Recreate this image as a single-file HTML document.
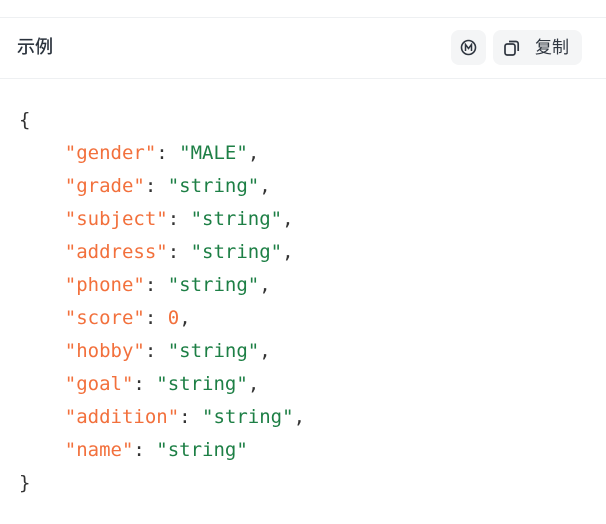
<!DOCTYPE html>
<html><head><meta charset="utf-8"><style>
body{margin:0;background:#fff;width:606px;height:524px;overflow:hidden;font-family:"Liberation Sans","Noto Sans CJK SC",sans-serif}
.top{position:absolute;left:0;top:17px;width:606px;border-top:1px solid #eef0f2}
.hdr{position:absolute;left:0;top:78px;width:606px;border-top:1px solid #eef0f2}
.title{position:absolute;left:17px;top:35px;font-size:18px;color:#2a323c;line-height:24px;-webkit-text-stroke:0.3px #2a323c}
.btn{position:absolute;top:30px;height:35px;background:#f4f5f6;border-radius:8px;color:#2f3640}
pre{position:absolute;left:19px;top:104px;margin:0;font-family:"DejaVu Sans Mono","Liberation Mono",monospace;font-size:19px;line-height:33px;color:#333}
.k{color:#f2703c}.s{color:#1d7f45}.n{color:#f2703c}
</style></head><body>
<div class="top"></div>
<div class="title">示例</div>
<div class="btn" style="left:451px;width:35px">
<svg width="35" height="35" viewBox="0 0 35 35"><circle cx="17.5" cy="17.5" r="7" fill="none" stroke="#2f3640" stroke-width="1.6"/><path d="M14.5 21V14.5l3 4 3-4V21" fill="none" stroke="#2f3640" stroke-width="1.5"/></svg></div>
<div class="btn" style="left:493px;width:89px">
<svg style="position:absolute;left:10px;top:9px" width="18" height="18" viewBox="0 0 18 18"><rect x="2" y="5" width="10" height="11" rx="2.2" fill="none" stroke="#2f3640" stroke-width="1.7"/><path d="M6 2.5h7a2.2 2.2 0 0 1 2.2 2.2V12" fill="none" stroke="#2f3640" stroke-width="1.7"/></svg>
<span style="position:absolute;left:42px;top:6px;font-size:17px;line-height:23px">复制</span></div>
<div class="hdr"></div>
<pre>{
    <span class="k">"gender"</span>: <span class="s">"MALE"</span>,
    <span class="k">"grade"</span>: <span class="s">"string"</span>,
    <span class="k">"subject"</span>: <span class="s">"string"</span>,
    <span class="k">"address"</span>: <span class="s">"string"</span>,
    <span class="k">"phone"</span>: <span class="s">"string"</span>,
    <span class="k">"score"</span>: <span class="n">0</span>,
    <span class="k">"hobby"</span>: <span class="s">"string"</span>,
    <span class="k">"goal"</span>: <span class="s">"string"</span>,
    <span class="k">"addition"</span>: <span class="s">"string"</span>,
    <span class="k">"name"</span>: <span class="s">"string"</span>
}</pre>
</body></html>
